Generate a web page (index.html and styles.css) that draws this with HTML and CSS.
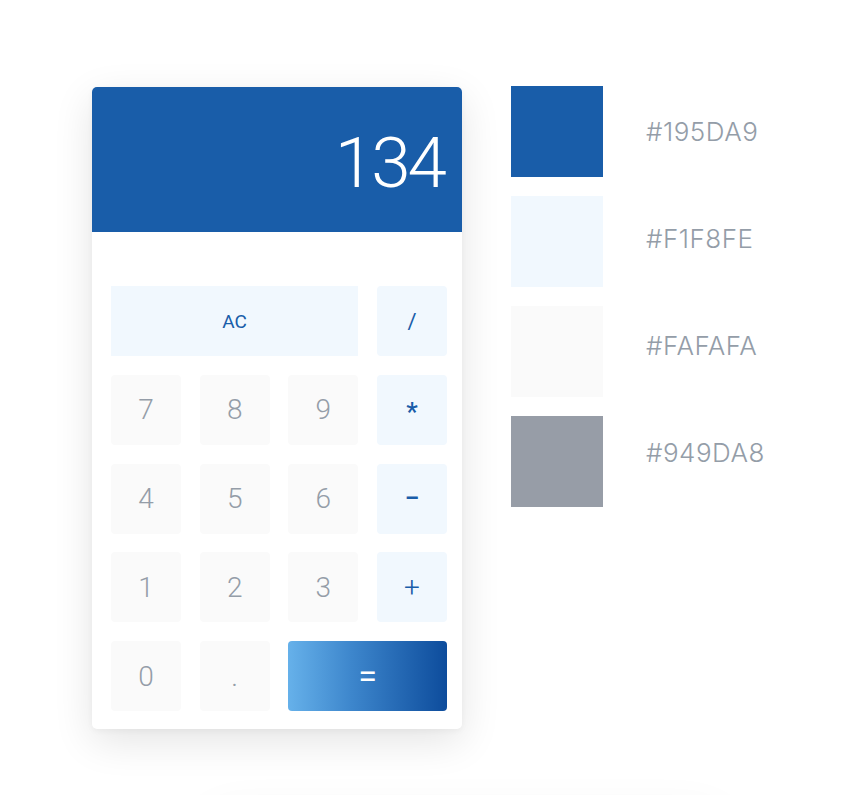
FILE: index.html
```html
<!DOCTYPE html>
<html>
<head>
<meta charset="utf-8">
<link rel="stylesheet" href="styles.css">
</head>
<body>
<div class="page">
  <div class="calc">
    <div class="display">134</div>
    <div class="keys">
      <div class="key op ac">AC</div>
      <div class="key op">/</div>
      <div class="key">7</div>
      <div class="key">8</div>
      <div class="key">9</div>
      <div class="key op star">*</div>
      <div class="key">4</div>
      <div class="key">5</div>
      <div class="key">6</div>
      <div class="key op minus">–</div>
      <div class="key">1</div>
      <div class="key">2</div>
      <div class="key">3</div>
      <div class="key op plus">+</div>
      <div class="key">0</div>
      <div class="key">.</div>
      <div class="key equals">=</div>
    </div>
  </div>
  <div class="palette">
    <div class="swatches">
      <div class="swatch c1"></div>
      <div class="swatch c2"></div>
      <div class="swatch c3"></div>
      <div class="swatch c4"></div>
    </div>
    <div class="labels">
      <span class="label">#195DA9</span>
      <span class="label">#F1F8FE</span>
      <span class="label">#FAFAFA</span>
      <span class="label">#949DA8</span>
    </div>
  </div>
  <div class="ghost"></div>
</div>
</body>
</html>
```
FILE: styles.css
```css
html, body {
  margin: 0;
  padding: 0;
  background: #ffffff;
  overflow: hidden;
}
body {
  font-family: "Inter", "Roboto", sans-serif;
  width: 857px;
  height: 795px;
}
.page {
  position: relative;
  display: flex;
  align-items: flex-start;
  padding: 86px 0 0 92px;
  gap: 49px;
  height: 709px;
  overflow: hidden;
}
.calc {
  margin-top: 1px;
  width: 370px;
  height: 642px;
  background: #fff;
  border-radius: 5px;
  box-shadow: 0 12px 40px rgba(0, 0, 0, 0.11), 0 2px 6px rgba(0, 0, 0, 0.04);
  overflow: hidden;
  display: flex;
  flex-direction: column;
  position: relative;
  z-index: 1;
}
.display {
  height: 145px;
  background: #195DA9;
  color: #fff;
  font-family: "Roboto", sans-serif;
  font-weight: 300;
  font-size: 71px;
  display: flex;
  align-items: center;
  justify-content: flex-end;
  padding: 6px 18px 0 0;
  box-sizing: border-box;
  letter-spacing: -3px;
}
.keys {
  flex: 1;
  padding: 54px 15px 18px 19px;
  display: grid;
  grid-template-columns: repeat(4, 70px);
  grid-auto-rows: 70px;
  justify-content: space-between;
  row-gap: 18.75px;
}
.key {
  background: #FAFAFA;
  border-radius: 4px;
  color: #949DA8;
  font-family: "Roboto", sans-serif;
  font-weight: 300;
  font-size: 28px;
  display: flex;
  align-items: center;
  justify-content: center;
}
.key.op {
  background: #F1F8FE;
  color: #195DA9;
  font-weight: 400;
  font-size: 22px;
}
.key.ac {
  grid-column: span 3;
  border-radius: 0;
  font-size: 19px;
}
.key.star {
  font-size: 26px;
  font-weight: 500;
  padding-top: 4px;
}
.key.minus {
  font-weight: 700;
  font-size: 22px;
}
.key.plus {
  font-weight: 300;
  font-size: 28px;
}
.key.equals {
  grid-column: span 2;
  background: linear-gradient(90deg, #66b1ea 0%, #3d86cc 40%, #0d4c9c 100%);
  color: #fff;
  font-size: 34px;
  font-weight: 400;
}
.palette {
  display: flex;
  gap: 43px;
}
.swatches {
  display: flex;
  flex-direction: column;
  gap: 19px;
}
.swatch {
  width: 92px;
  height: 91px;
}
.c1 { background: #195DA9; }
.c2 { background: #F1F8FE; }
.c3 { background: #FAFAFA; }
.c4 { background: #979DA7; }
.labels {
  display: flex;
  flex-direction: column;
  padding-top: 31px;
  gap: 77px;
}
.label {
  font-family: "Inter", sans-serif;
  font-weight: 300;
  font-size: 26px;
  line-height: 30px;
  letter-spacing: 0.5px;
  color: #949DA8;
}
.ghost {
  position: absolute;
  left: 190px;
  top: 805px;
  width: 550px;
  height: 100px;
  border-radius: 60px;
  box-shadow: 0 0 40px rgba(0, 0, 0, 0.04);
}
```
